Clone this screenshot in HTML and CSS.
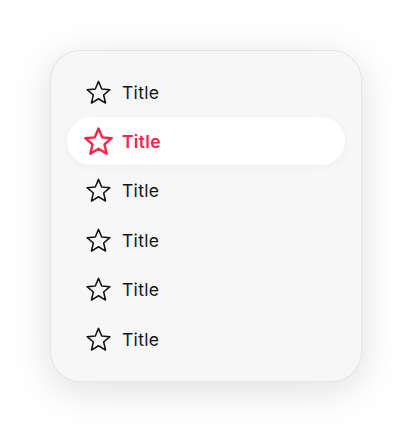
FILE: index.html
```html
<!DOCTYPE html>
<html>
<head>
<meta charset="utf-8">
<link rel="stylesheet" href="styles.css">
</head>
<body>
<div class="card">
  <ul class="menu">
    <li class="item"><svg class="star" viewBox="0 0 24 24"><path d="M12 1.3 L15.06 8.59 L22.94 9.25 L16.95 14.41 L18.76 22.1 L12 18 L5.24 22.1 L7.05 14.41 L1.06 9.25 L8.94 8.59 Z"/></svg><span class="label">Title</span></li>
    <li class="item selected"><svg class="star" viewBox="0 0 24 24"><path d="M12 1.3 L15.06 8.59 L22.94 9.25 L16.95 14.41 L18.76 22.1 L12 18 L5.24 22.1 L7.05 14.41 L1.06 9.25 L8.94 8.59 Z"/></svg><span class="label">Title</span></li>
    <li class="item"><svg class="star" viewBox="0 0 24 24"><path d="M12 1.3 L15.06 8.59 L22.94 9.25 L16.95 14.41 L18.76 22.1 L12 18 L5.24 22.1 L7.05 14.41 L1.06 9.25 L8.94 8.59 Z"/></svg><span class="label">Title</span></li>
    <li class="item"><svg class="star" viewBox="0 0 24 24"><path d="M12 1.3 L15.06 8.59 L22.94 9.25 L16.95 14.41 L18.76 22.1 L12 18 L5.24 22.1 L7.05 14.41 L1.06 9.25 L8.94 8.59 Z"/></svg><span class="label">Title</span></li>
    <li class="item"><svg class="star" viewBox="0 0 24 24"><path d="M12 1.3 L15.06 8.59 L22.94 9.25 L16.95 14.41 L18.76 22.1 L12 18 L5.24 22.1 L7.05 14.41 L1.06 9.25 L8.94 8.59 Z"/></svg><span class="label">Title</span></li>
    <li class="item"><svg class="star" viewBox="0 0 24 24"><path d="M12 1.3 L15.06 8.59 L22.94 9.25 L16.95 14.41 L18.76 22.1 L12 18 L5.24 22.1 L7.05 14.41 L1.06 9.25 L8.94 8.59 Z"/></svg><span class="label">Title</span></li>
  </ul>
</div>
</body>
</html>
```

FILE: styles.css
```css
html, body {
  margin: 0;
  padding: 0;
  background: #ffffff;
}
body {
  box-sizing: border-box;
  min-height: 432px;
  padding: 50px 0 0 50px;
  font-family: Inter, "Noto Sans", sans-serif;
}
.card {
  box-sizing: border-box;
  width: 312px;
  height: 332px;
  background: #f7f7f7;
  border-radius: 30px;
  border: 0.5px solid rgba(0, 0, 0, 0.07);
  box-shadow: 0 8px 40px rgba(0, 0, 0, 0.13);
  padding: 17px 16px 0 16px;
}
.menu {
  list-style: none;
  margin: 0;
  padding: 0;
  display: flex;
  flex-direction: column;
  gap: 1.6px;
}
.item {
  height: 48px;
  display: flex;
  align-items: center;
  padding-left: 19px;
  color: #141414;
  font-size: 17.5px;
  letter-spacing: 0.3px;
}
.star {
  width: 25px;
  height: 25px;
  fill: none;
  stroke: #111111;
  stroke-width: 1.45;
  stroke-linejoin: round;
  margin-right: 11px;
}
.selected {
  background: #ffffff;
  border-radius: 24px;
  box-shadow: 0 2px 10px rgba(0, 0, 0, 0.04);
  color: #ff2249;
  font-weight: 600;
  padding-left: 17px;
  margin-top: -0.5px;
}
.selected .star {
  width: 29px;
  height: 29px;
  stroke: #ff2249;
  stroke-width: 2;
  margin-right: 9px;
}
```
